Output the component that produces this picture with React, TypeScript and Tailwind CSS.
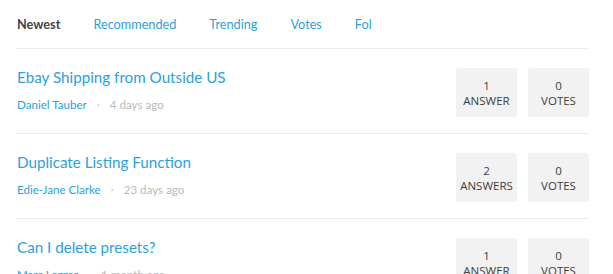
const tabs = ["Recommended", "Trending", "Votes", "Fol"];

const questions = [
  { title: "Ebay Shipping from Outside US", author: "Daniel Tauber", when: "4 days ago", answers: 1, votes: 0 },
  { title: "Duplicate Listing Function", author: "Edie-Jane Clarke", when: "23 days ago", answers: 2, votes: 0 },
  { title: "Can I delete presets?", author: "Marc Lazzar", when: "1 month ago", answers: 1, votes: 0 },
];

function StatBox({ count, label }: { count: number; label: string }) {
  return (
    <div className="w-[61px] h-[49px] rounded-[3px] bg-[#f2f2f2] flex flex-col items-center justify-center text-[11.5px] leading-[15px] text-[#3d3d3d] font-['Open_Sans',sans-serif]">
      <span>{count}</span>
      <span className="uppercase">{label}</span>
    </div>
  );
}

export default function App() {
  return (
    <div className="w-[613px] h-[274px] overflow-hidden bg-white pl-[17px] pr-[24px] font-['Lato',sans-serif]">
      <div className="h-[49px] flex items-center gap-[33px] border-b border-[#ececec] text-[12.7px] pt-[2px]">
        <span className="font-bold text-[#444]">Newest</span>
        {tabs.map((t) => (
          <span key={t} className="text-[#2b9fe0]">
            {t}
          </span>
        ))}
      </div>
      {questions.map((q) => (
        <div key={q.title} className="flex justify-between items-start pt-[18px] h-[85px] border-b border-[#ececec]">
          <div className="flex flex-col gap-[10px]">
            <h2 className="text-[15.2px] leading-[20px] text-[#2b9fe0]">{q.title}</h2>
            <div className="flex items-center gap-[10px] text-[11.6px] leading-[16px]">
              <span className="text-[#2b9fe0]">{q.author}</span>
              <span className="text-[#c4c4c4]">·</span>
              <span className="text-[#bababa]">{q.when}</span>
            </div>
          </div>
          <div className="flex gap-[11px] mt-[1px]">
            <StatBox count={q.answers} label={q.answers === 1 ? "Answer" : "Answers"} />
            <StatBox count={q.votes} label="Votes" />
          </div>
        </div>
      ))}
    </div>
  );
}
